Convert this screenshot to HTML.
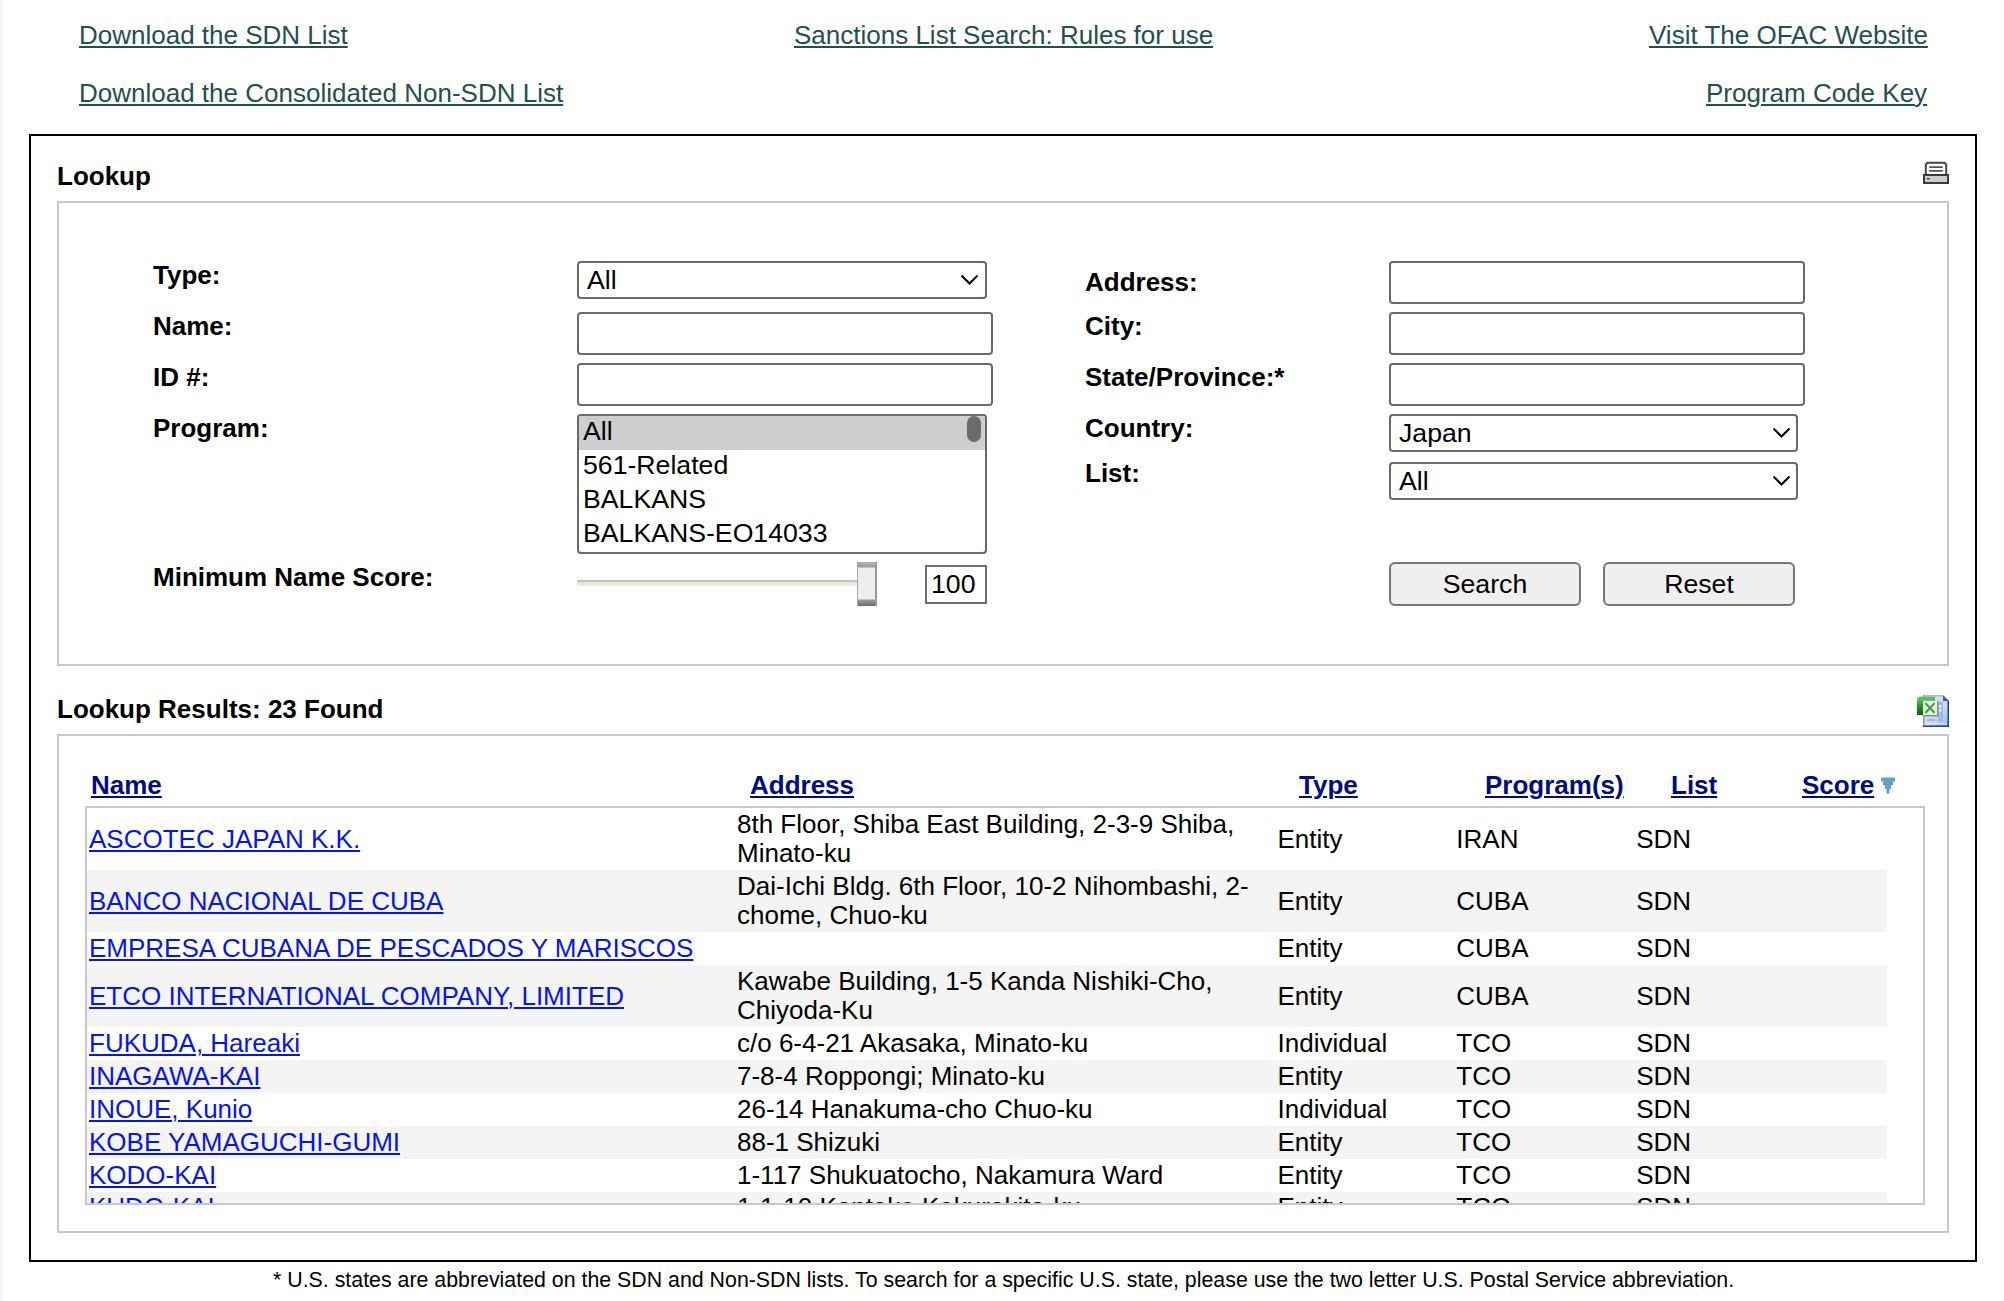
<!DOCTYPE html>
<html><head><meta charset="utf-8">
<style>
html,body{margin:0;padding:0;background:#fff;}
body{width:2004px;height:1301px;position:relative;overflow:hidden;font-family:"Liberation Sans",sans-serif;font-size:26px;color:#000;}
.a{position:absolute;white-space:nowrap;line-height:30px;}
.tl{color:#244f4f;text-decoration:underline;text-decoration-thickness:2px;text-underline-offset:2px;}
.b{font-weight:bold;}
.box{position:absolute;box-sizing:border-box;}
.inp{position:absolute;box-sizing:border-box;border:2px solid #6a6a6a;border-radius:4px;background:#fff;}
.hd{color:#000c80;font-weight:bold;text-decoration:underline;text-decoration-thickness:2px;text-underline-offset:2px;}
.lk{color:#0514f0;text-decoration:underline;text-decoration-thickness:2px;text-underline-offset:2px;}
.row{position:absolute;left:87px;width:1800px;}
.g{background:#f4f4f4;}
.btn{position:absolute;box-sizing:border-box;border:2px solid #767676;border-radius:6px;background:#efefef;text-align:center;}
.chev{position:absolute;}
.fc{font-size:26.67px;}
.btn.a{font-size:26.67px;}
</style></head><body>
<div class="box" style="left:0;top:0;width:3px;height:1301px;background:#f5f7f5"></div>
<div class="box" style="left:2003px;top:0;width:1px;height:1301px;background:#fbfbfb"></div>

<!-- top links -->
<div class="a tl" style="left:79px;top:20px">Download the SDN List</div>
<div class="a tl" style="left:79px;top:78px">Download the Consolidated Non-SDN List</div>
<div class="a tl" style="left:794px;top:20px">Sanctions List Search: Rules for use</div>
<div class="a tl" style="left:1649px;top:20px">Visit The OFAC Website</div>
<div class="a tl" style="left:1706px;top:78px">Program Code Key</div>

<!-- outer black box -->
<div class="box" style="left:29px;top:134px;width:1948px;height:1128px;border:2px solid #000"></div>

<div class="a b" style="left:57px;top:161px">Lookup</div>
<!-- printer icon -->
<svg class="box" style="left:1921px;top:160px" width="30" height="26" viewBox="0 0 30 26">
  <path d="M4.8 15 V4.5 L6.2 2.8 H23.8 L25.2 4.5 V15" fill="#fff" stroke="#454545" stroke-width="2"/>
  <rect x="8" y="6.2" width="14" height="1.8" rx="0.9" fill="#565656"/>
  <rect x="8" y="10" width="14" height="1.8" rx="0.9" fill="#565656"/>
  <rect x="3" y="15" width="24" height="8" fill="#cdcdcd" stroke="#3a3a3a" stroke-width="2"/>
  <rect x="5.5" y="18" width="3.5" height="1.6" rx="0.8" fill="#454545"/>
</svg>

<!-- lookup panel -->
<div class="box" style="left:57px;top:201px;width:1892px;height:465px;border:2px solid #c8c8c8"></div>

<div class="a b" style="left:153px;top:260px">Type:</div>
<div class="a b" style="left:153px;top:311px">Name:</div>
<div class="a b" style="left:153px;top:362px">ID #:</div>
<div class="a b" style="left:153px;top:413px">Program:</div>
<div class="a b" style="left:153px;top:562px">Minimum Name Score:</div>

<div class="inp" style="left:577px;top:261px;width:410px;height:38px"></div>
<div class="a fc" style="left:587px;top:265px">All</div>
<svg class="chev" style="left:960px;top:273px" width="20" height="14" viewBox="0 0 20 14"><path d="M1.5 2.5 L9.5 10.5 L17.5 2.5" fill="none" stroke="#000" stroke-width="2"/></svg>

<div class="inp" style="left:577px;top:312px;width:416px;height:43px"></div>
<div class="inp" style="left:577px;top:363px;width:416px;height:43px"></div>

<!-- program listbox -->
<div class="inp" style="left:577px;top:414px;width:410px;height:140px;overflow:hidden">
  <div style="position:absolute;left:0;top:0;width:406px;height:34px;background:#cecece"></div>
  <div style="position:absolute;left:388px;top:0px;width:14px;height:26px;border-radius:7px;background:#6b6b6b"></div>
</div>
<div class="a fc" style="left:583px;top:416px">All</div>
<div class="a fc" style="left:583px;top:450px">561-Related</div>
<div class="a fc" style="left:583px;top:484px">BALKANS</div>
<div class="a fc" style="left:583px;top:518px">BALKANS-EO14033</div>

<!-- slider -->
<div class="box" style="left:577px;top:580px;width:281px;height:2px;background:#c0c1bb"></div>
<div class="box" style="left:577px;top:582px;width:281px;height:4px;background:linear-gradient(#e8e4d8,#f1ede2)"></div>
<div class="box" style="left:857px;top:562px;width:20px;height:44px;background:linear-gradient(to bottom,#b4b4b4 0,#9c9c9c 5px,#ececec 6px,#eeeeee 37px,#9a9a9a 38px,#6c6c6c 44px);box-shadow:inset 1px 0 0 #a8a8a8,inset -2px 0 0 #999"></div>
<div class="box" style="left:925px;top:565px;width:62px;height:39px;border:2px solid #6e6e6e;background:#fff"></div>
<div class="a fc" style="left:931px;top:569px">100</div>

<!-- right column -->
<div class="a b" style="left:1085px;top:267px">Address:</div>
<div class="a b" style="left:1085px;top:311px">City:</div>
<div class="a b" style="left:1085px;top:362px">State/Province:*</div>
<div class="a b" style="left:1085px;top:413px">Country:</div>
<div class="a b" style="left:1085px;top:458px">List:</div>

<div class="inp" style="left:1389px;top:261px;width:416px;height:43px"></div>
<div class="inp" style="left:1389px;top:312px;width:416px;height:43px"></div>
<div class="inp" style="left:1389px;top:363px;width:416px;height:43px"></div>
<div class="inp" style="left:1389px;top:414px;width:409px;height:38px"></div>
<div class="a fc" style="left:1399px;top:418px">Japan</div>
<svg class="chev" style="left:1772px;top:426px" width="20" height="14" viewBox="0 0 20 14"><path d="M1.5 2.5 L9.5 10.5 L17.5 2.5" fill="none" stroke="#000" stroke-width="2"/></svg>
<div class="inp" style="left:1389px;top:462px;width:409px;height:38px"></div>
<div class="a fc" style="left:1399px;top:466px">All</div>
<svg class="chev" style="left:1772px;top:474px" width="20" height="14" viewBox="0 0 20 14"><path d="M1.5 2.5 L9.5 10.5 L17.5 2.5" fill="none" stroke="#000" stroke-width="2"/></svg>

<div class="btn a" style="left:1389px;top:562px;width:192px;height:44px;line-height:40px">Search</div>
<div class="btn a" style="left:1603px;top:562px;width:192px;height:44px;line-height:40px">Reset</div>

<!-- results -->
<div class="a b" style="left:57px;top:694px">Lookup Results: 23 Found</div>
<!-- excel icon -->
<svg class="box" style="left:1912px;top:690px" width="40" height="40" viewBox="0 0 40 40">
  <defs>
    <linearGradient id="bl" x1="0" y1="0" x2="1" y2="1"><stop offset="0" stop-color="#dce8f8"/><stop offset="0.6" stop-color="#c6daf2"/><stop offset="1" stop-color="#8cb4ec"/></linearGradient>
    <linearGradient id="gl" x1="0" y1="0" x2="0" y2="1"><stop offset="0" stop-color="#7cc87c"/><stop offset="0.45" stop-color="#2e9a2e"/><stop offset="1" stop-color="#06600a"/></linearGradient>
    <linearGradient id="gi" x1="0" y1="0" x2="0" y2="1"><stop offset="0" stop-color="#eef9ea"/><stop offset="1" stop-color="#d8f8c8"/></linearGradient>
  </defs>
  <path d="M11 5 H31 L37 11 V37 H11 Z" fill="url(#bl)"/>
  <rect x="11" y="5" width="20" height="1.5" fill="#aebcd4"/>
  <rect x="11" y="5" width="1.5" height="32" fill="#8e9cb6"/>
  <path d="M31 5 L37 11 L31 11 Z" fill="#4a6080"/>
  <rect x="35.5" y="11" width="1.5" height="26" fill="#2c4262"/>
  <rect x="11" y="35.5" width="26" height="1.5" fill="#2c4262"/>
  <rect x="13.5" y="33" width="21" height="1" fill="#e4eefa" opacity="0.8"/>
  <rect x="26" y="12" width="5" height="19" fill="#9cbce2"/>
  <rect x="27" y="15" width="2.5" height="2.5" fill="#e8f0fa"/>
  <rect x="27" y="19" width="2.5" height="2.5" fill="#e8f0fa"/>
  <rect x="15" y="29" width="8" height="2" fill="#9ab8dc"/>
  <path d="M5 10 Q5 6.5 8.5 6.5 H23 V25 H5 Z" fill="url(#gl)"/>
  <path d="M5.6 10.8 Q6 7.1 8.8 7.1 H23 V10.8 Z" fill="#5cbd5c" opacity="0.85"/>
  <rect x="11" y="10.8" width="14" height="14.2" fill="url(#gi)"/>
  <rect x="25" y="11" width="1.5" height="15.5" fill="#8a8e8a"/>
  <rect x="11" y="25" width="15.5" height="1.5" fill="#8a8e8a"/>
  <path d="M14 13.8 L22 22.2 M22 13.8 L14 22.2" stroke="#4a9450" stroke-width="2" stroke-linecap="round"/>
</svg>

<div class="box" style="left:57px;top:734px;width:1892px;height:499px;border:2px solid #c8c8c8"></div>

<div class="a hd" style="left:91px;top:770px">Name</div>
<div class="a hd" style="left:750px;top:770px">Address</div>
<div class="a hd" style="left:1299px;top:770px">Type</div>
<div class="a hd" style="left:1485px;top:770px">Program(s)</div>
<div class="a hd" style="left:1671px;top:770px">List</div>
<div class="a hd" style="left:1802px;top:770px">Score</div>
<svg class="box" style="left:1880px;top:777px" width="16" height="18" viewBox="0 0 16 18"><path d="M1 0.6 H15 V4.5 H13 V8.3 H11 V12 H9.5 V16.5 H6.5 V12 H5 V8.3 H3 V4.5 H1 Z" fill="#64a0cc"/></svg>

<!-- inner scroll box -->
<div class="box" style="left:85px;top:806px;width:1840px;height:399px;border:2px solid #c8c8c8;overflow:hidden">
<div style="position:absolute;left:0;top:0;width:1836px;height:395px;">
  <div class="a " style="left:2.00px;top:15.50px"><span class="lk">ASCOTEC JAPAN K.K.</span></div>
  <div class="a " style="left:650.00px;top:1.00px">8th Floor, Shiba East Building, 2-3-9 Shiba,</div>
  <div class="a " style="left:650.00px;top:30.00px">Minato-ku</div>
  <div class="a " style="left:1190.50px;top:15.50px">Entity</div>
  <div class="a " style="left:1369.30px;top:15.50px">IRAN</div>
  <div class="a " style="left:1549.20px;top:15.50px">SDN</div>
  <div class="row g" style="left:0;top:62.00px;height:62.00px"></div>
  <div class="a " style="left:2.00px;top:77.50px"><span class="lk">BANCO NACIONAL DE CUBA</span></div>
  <div class="a " style="left:650.00px;top:63.00px">Dai-Ichi Bldg. 6th Floor, 10-2 Nihombashi, 2-</div>
  <div class="a " style="left:650.00px;top:92.00px">chome, Chuo-ku</div>
  <div class="a " style="left:1190.50px;top:77.50px">Entity</div>
  <div class="a " style="left:1369.30px;top:77.50px">CUBA</div>
  <div class="a " style="left:1549.20px;top:77.50px">SDN</div>
  <div class="a " style="left:2.00px;top:125.00px"><span class="lk">EMPRESA CUBANA DE PESCADOS Y MARISCOS</span></div>
  <div class="a " style="left:1190.50px;top:125.00px">Entity</div>
  <div class="a " style="left:1369.30px;top:125.00px">CUBA</div>
  <div class="a " style="left:1549.20px;top:125.00px">SDN</div>
  <div class="row g" style="left:0;top:157.00px;height:62.00px"></div>
  <div class="a " style="left:2.00px;top:172.50px"><span class="lk">ETCO INTERNATIONAL COMPANY, LIMITED</span></div>
  <div class="a " style="left:650.00px;top:158.00px">Kawabe Building, 1-5 Kanda Nishiki-Cho,</div>
  <div class="a " style="left:650.00px;top:187.00px">Chiyoda-Ku</div>
  <div class="a " style="left:1190.50px;top:172.50px">Entity</div>
  <div class="a " style="left:1369.30px;top:172.50px">CUBA</div>
  <div class="a " style="left:1549.20px;top:172.50px">SDN</div>
  <div class="a " style="left:2.00px;top:220.00px"><span class="lk">FUKUDA, Hareaki</span></div>
  <div class="a " style="left:650.00px;top:220.00px">c/o 6-4-21 Akasaka, Minato-ku</div>
  <div class="a " style="left:1190.50px;top:220.00px">Individual</div>
  <div class="a " style="left:1369.30px;top:220.00px">TCO</div>
  <div class="a " style="left:1549.20px;top:220.00px">SDN</div>
  <div class="row g" style="left:0;top:252.00px;height:33.00px"></div>
  <div class="a " style="left:2.00px;top:253.00px"><span class="lk">INAGAWA-KAI</span></div>
  <div class="a " style="left:650.00px;top:253.00px">7-8-4 Roppongi; Minato-ku</div>
  <div class="a " style="left:1190.50px;top:253.00px">Entity</div>
  <div class="a " style="left:1369.30px;top:253.00px">TCO</div>
  <div class="a " style="left:1549.20px;top:253.00px">SDN</div>
  <div class="a " style="left:2.00px;top:286.00px"><span class="lk">INOUE, Kunio</span></div>
  <div class="a " style="left:650.00px;top:286.00px">26-14 Hanakuma-cho Chuo-ku</div>
  <div class="a " style="left:1190.50px;top:286.00px">Individual</div>
  <div class="a " style="left:1369.30px;top:286.00px">TCO</div>
  <div class="a " style="left:1549.20px;top:286.00px">SDN</div>
  <div class="row g" style="left:0;top:318.00px;height:33.00px"></div>
  <div class="a " style="left:2.00px;top:319.00px"><span class="lk">KOBE YAMAGUCHI-GUMI</span></div>
  <div class="a " style="left:650.00px;top:319.00px">88-1 Shizuki</div>
  <div class="a " style="left:1190.50px;top:319.00px">Entity</div>
  <div class="a " style="left:1369.30px;top:319.00px">TCO</div>
  <div class="a " style="left:1549.20px;top:319.00px">SDN</div>
  <div class="a " style="left:2.00px;top:352.00px"><span class="lk">KODO-KAI</span></div>
  <div class="a " style="left:650.00px;top:352.00px">1-117 Shukuatocho, Nakamura Ward</div>
  <div class="a " style="left:1190.50px;top:352.00px">Entity</div>
  <div class="a " style="left:1369.30px;top:352.00px">TCO</div>
  <div class="a " style="left:1549.20px;top:352.00px">SDN</div>
  <div class="row g" style="left:0;top:384.00px;height:33.00px"></div>
  <div class="a " style="left:2.00px;top:383.50px"><span class="lk">KUDO-KAI</span></div>
  <div class="a " style="left:650.00px;top:383.50px">1-1-10 Kantake Kokurakita-ku</div>
  <div class="a " style="left:1190.50px;top:383.50px">Entity</div>
  <div class="a " style="left:1369.30px;top:383.50px">TCO</div>
  <div class="a " style="left:1549.20px;top:383.50px">SDN</div>
</div>
</div>

<div class="a" style="left:273px;top:1266.5px;font-size:21.35px;line-height:26px">* U.S. states are abbreviated on the SDN and Non-SDN lists. To search for a specific U.S. state, please use the two letter U.S. Postal Service abbreviation.</div>
</body></html>
